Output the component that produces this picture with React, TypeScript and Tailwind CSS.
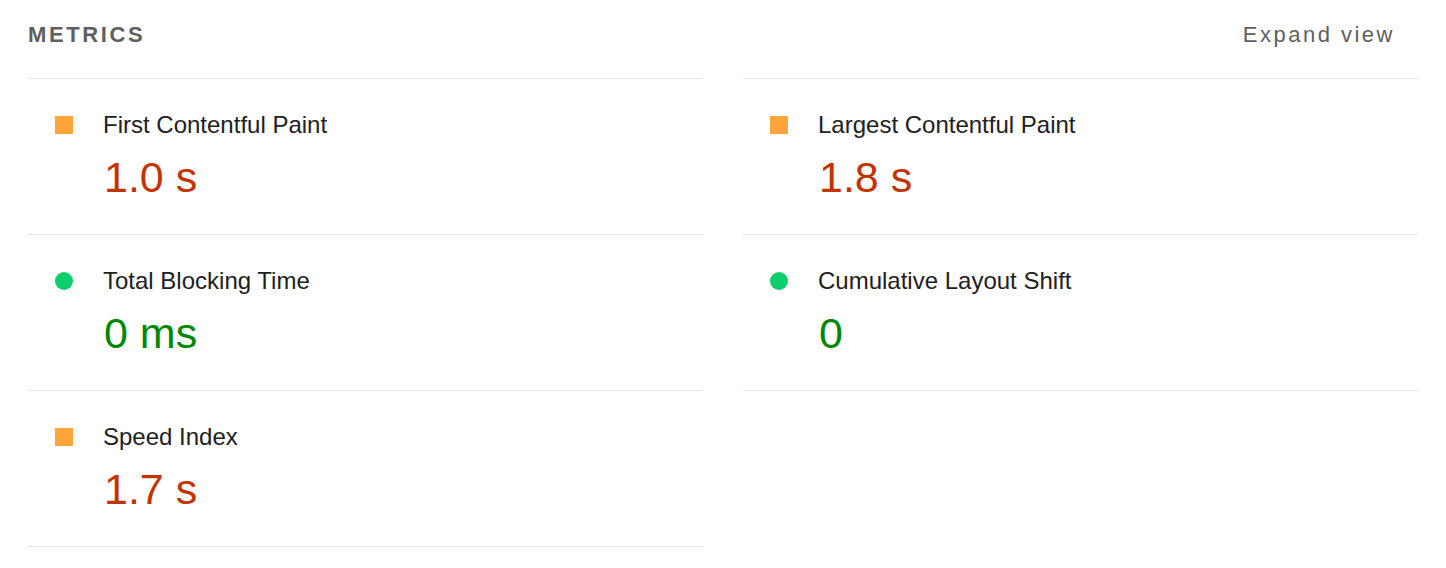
import React from "react";

type Metric = { title: string; value: string; kind: "avg" | "pass" };

const left: Metric[] = [
  { title: "First Contentful Paint", value: "1.0 s", kind: "avg" },
  { title: "Total Blocking Time", value: "0 ms", kind: "pass" },
  { title: "Speed Index", value: "1.7 s", kind: "avg" },
];
const right: Metric[] = [
  { title: "Largest Contentful Paint", value: "1.8 s", kind: "avg" },
  { title: "Cumulative Layout Shift", value: "0", kind: "pass" },
];

function Row({ m }: { m: Metric }) {
  return (
    <div className="border-t border-[#e5e5e5] pt-[31px] pb-[32px] h-[156px]">
      <div className="flex items-center h-[30px]">
        <div className="w-[27px] shrink-0" />
        {m.kind === "avg" ? (
          <div className="w-[18px] h-[18px] bg-[#ffa63a] shrink-0" />
        ) : (
          <div className="w-[18px] h-[18px] rounded-full bg-[#0cce6b] shrink-0" />
        )}
        <div className="ml-[30px] text-[24px] leading-[30px] text-[#212121]">{m.title}</div>
      </div>
      <div
        className={
          "mt-[12px] ml-[76px] text-[43px] leading-[50px] " +
          (m.kind === "avg" ? "text-[#c33300]" : "text-[#008800]")
        }
      >
        {m.value}
      </div>
    </div>
  );
}

export default function App() {
  return (
    <div
      className="w-[1446px] h-[568px] bg-white px-[28px] overflow-hidden"
      style={{ fontFamily: '"Liberation Sans", Arial, sans-serif' }}
    >
      <div className="flex justify-between pt-[20px] h-[78px] items-start">
        <div className="text-[22px] leading-[30px] font-bold tracking-[2.6px] text-[#5f5f5f]">METRICS</div>
        <div className="text-[22px] leading-[30px] tracking-[2.5px] text-[#5f5f5f] mr-[23px]">Expand view</div>
      </div>
      <div className="grid grid-cols-2 gap-x-[40px] items-start">
        <div className="border-b border-[#e5e5e5]">
          {left.map((m) => (
            <Row key={m.title} m={m} />
          ))}
        </div>
        <div className="border-b border-[#e5e5e5]">
          {right.map((m) => (
            <Row key={m.title} m={m} />
          ))}
        </div>
      </div>
    </div>
  );
}
